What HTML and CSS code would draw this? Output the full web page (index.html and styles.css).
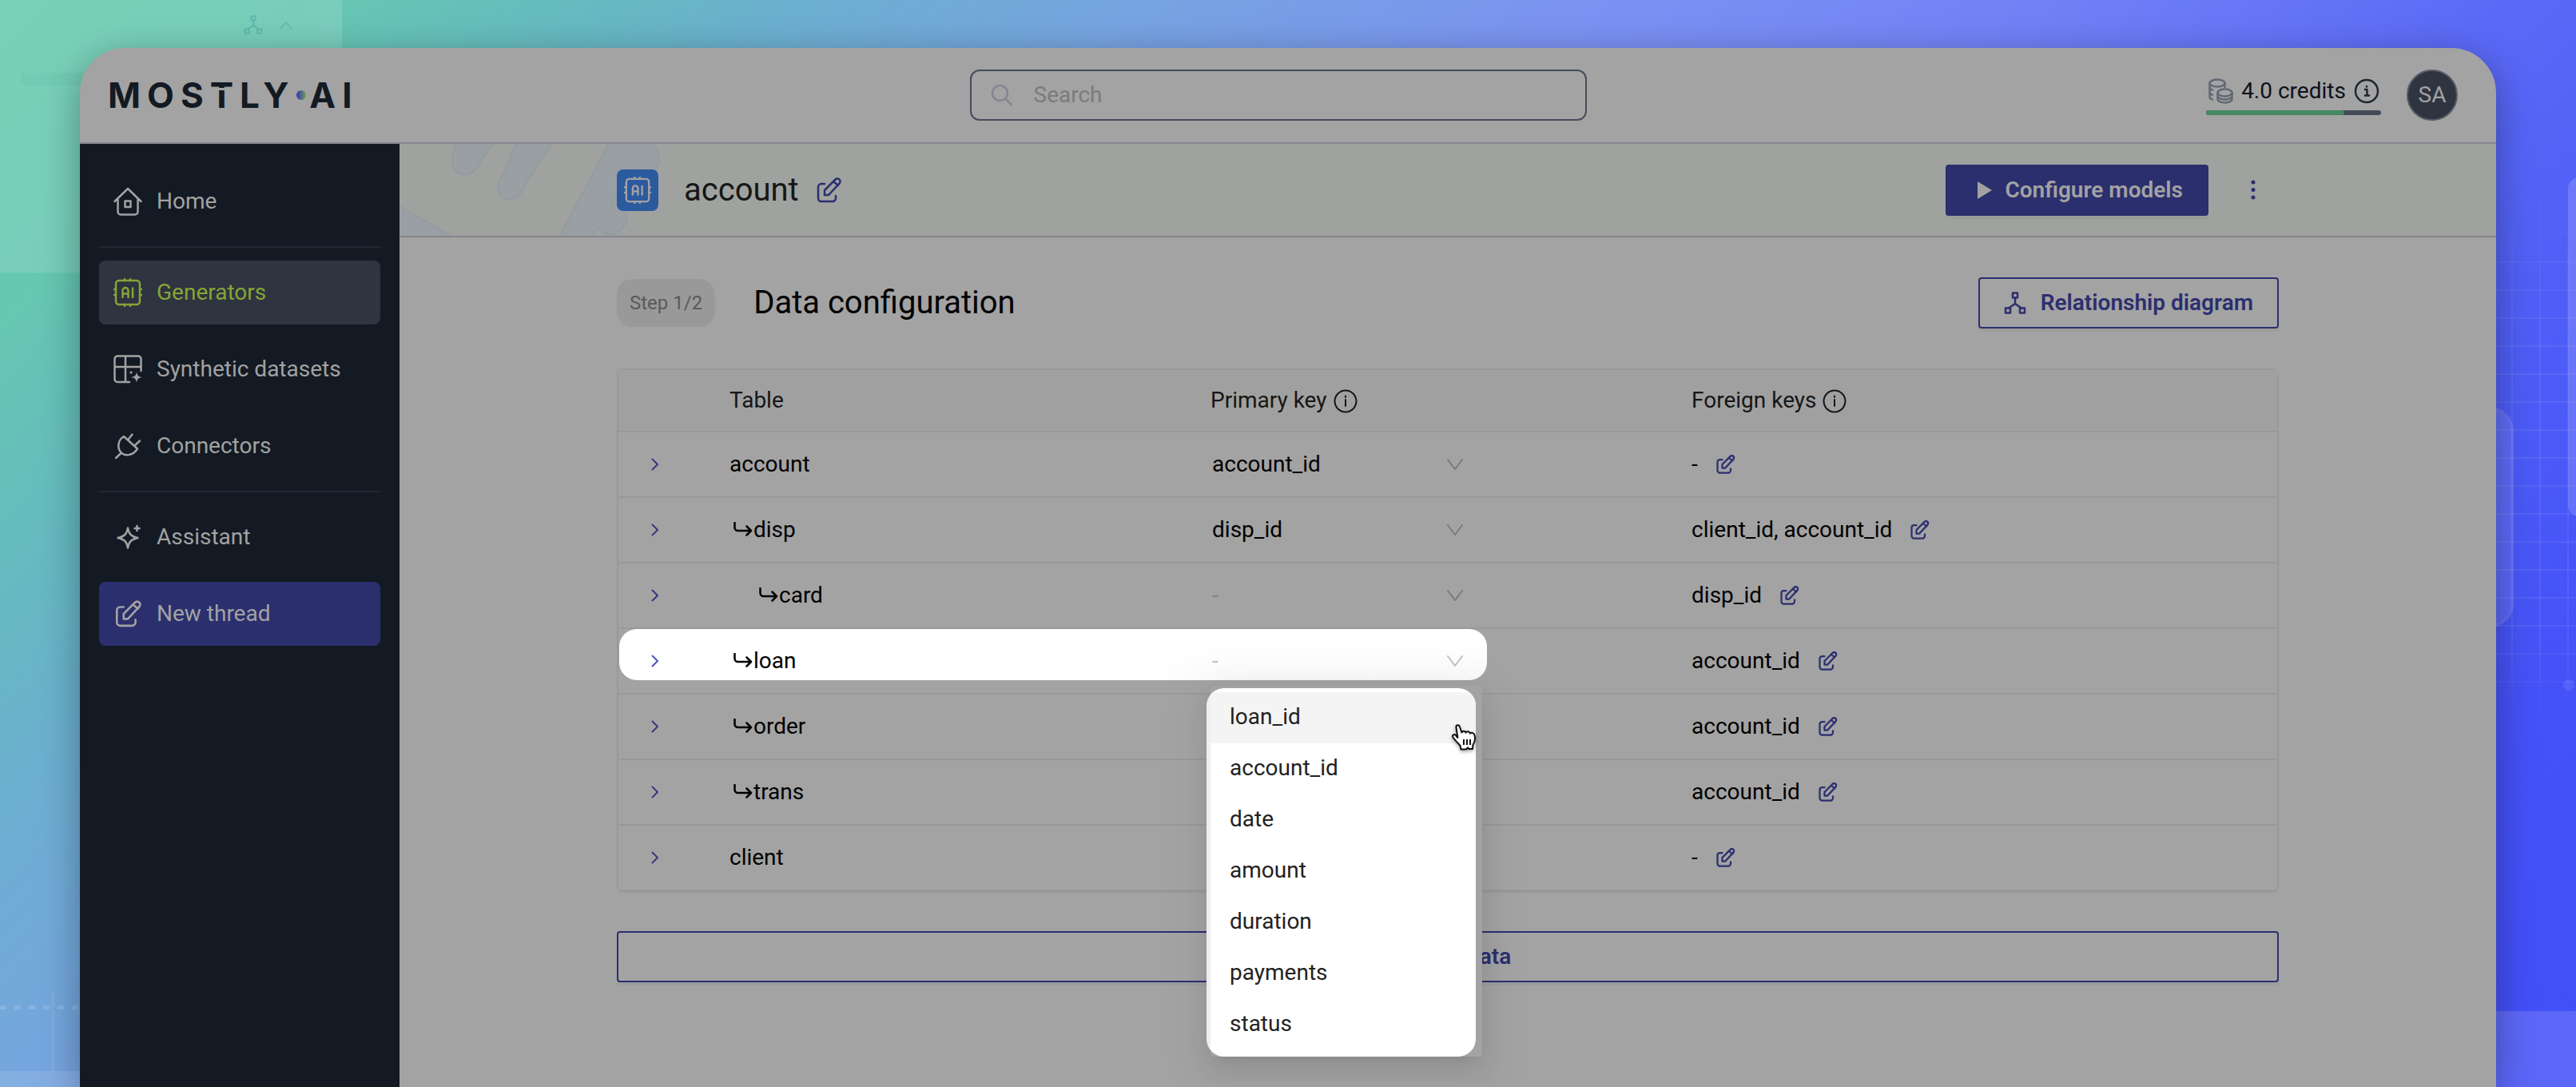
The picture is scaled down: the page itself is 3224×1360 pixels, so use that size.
FILE: index.html
```html
<!DOCTYPE html>
<html lang="en">
<head>
<meta charset="utf-8">
<title>account – Data configuration</title>
<link rel="stylesheet" href="styles.css">
</head>
<body>
<svg class="sprite" aria-hidden="true">
  <symbol id="i-edit" viewBox="0 0 32 32"><path d="M10 8H6a4 4 0 0 0-4 4v14a4 4 0 0 0 4 4h14a4 4 0 0 0 4-4v-3M10 22v-6L23.500 2.500a3.500 3.500 0 0 1 5 0a3.500 3.500 0 0 1 0 5L15 22zM21 5l6 5" /></symbol>
  <symbol id="i-ai" viewBox="0 0 36 36"><rect x="3" y="3" width="30" height="30" rx="4"/><path d="M14 1v2M21 1v2M14 33v2M21 33v2M1 14h2M1 21h2M33 14h2M33 21h2M11.500 24v-8.500a3.500 3.500 0 0 1 7 0V24M11.500 19.500h7M24 12.500V24"/></symbol>
  <symbol id="i-info" viewBox="0 0 32 32"><circle cx="16" cy="16" r="13.500"/><path d="M16 14v8M16 9.500v1.500"/></symbol>
  <symbol id="i-tree" viewBox="0 0 28 28"><rect x="11" y="1.500" width="6" height="6"/><rect x="2" y="20.500" width="6" height="6"/><rect x="20" y="20.500" width="6" height="6"/><path d="M14 7.500V15M14 15l-8 5.500M14 15l8 5.500"/></symbol>
  <symbol id="i-right" viewBox="0 0 10 16"><path d="M1.500 1.500L8 8l-6.500 6.500"/></symbol>
  <symbol id="i-down" viewBox="0 0 20 14"><path d="M1 1l9 12L19 1"/></symbol>
  <symbol id="i-branch" viewBox="0 0 26 20"><path d="M2.500 1v6a4 4 0 0 0 4 4H22M17.500 5.500L23 11l-5.500 5.500"/></symbol>
</svg>

<div class="backdrop" aria-hidden="true">
  <div class="panel-tl">
    <svg class="icon ghost-tree"><use href="#i-tree"/></svg>
    <svg class="icon ghost-caret" viewBox="0 0 16 10"><path d="M1 9l7-8l7 8"/></svg>
  </div>
  <div class="bar-tl"></div>
  <div class="grid-r"></div>
  <div class="card-r"></div>
  <div class="pill-r"></div>
  <div class="dot-r"></div>
  <div class="panel-br"></div>
  <div class="dots-bl"></div>
  <div class="line-bl"></div>
  <div class="panel-bl"></div>
</div>

<div class="app">
  <header class="topbar">
    <a class="logo" href="#" aria-label="MOSTLY AI"><span>MOS</span><span class="logo-t">T</span><span>LY</span><i class="logo-dot"></i><span>AI</span></a>
    <label class="search">
      <svg class="icon" viewBox="0 0 28 28"><circle cx="11.500" cy="11.500" r="9.500"/><path d="M18 18.500L26 26"/></svg>
      <input type="search" placeholder="Search" aria-label="Search">
    </label>
    <div class="account">
      <div class="credits">
        <div class="credits-row">
          <svg class="icon coins" viewBox="0 0 32 32"><ellipse cx="12" cy="6" rx="9.500" ry="4.500"/><path d="M2.500 6v17c0 1.500 1.500 3 3.500 3.500M2.500 11.500c0 1 1.500 2.500 3.500 3M2.500 17c0 1.500 1.500 3 3.500 3.500M21.500 6v5"/><ellipse cx="21.500" cy="18" rx="9" ry="4.500"/><path d="M12.500 18v8c0 2.500 4 4.500 9 4.500s9-2 9-4.500v-8M12.500 22c0 2.500 4 4.500 9 4.500s9-2 9-4.500"/></svg>
          <span>4.0 credits</span>
          <svg class="icon info-dark" viewBox="0 0 32 32"><circle cx="16" cy="16" r="14"/><path d="M14 14h2.500v7.500M14 21.500h5M16 10v.5"/></svg>
        </div>
        <div class="meter"><div class="meter-fill" style="width:79%"></div></div>
      </div>
      <button class="avatar" type="button">SA</button>
    </div>
  </header>

  <div class="body">
    <nav class="sidebar">
      <a href="#" class="nav-item"><svg class="icon" viewBox="0 0 36 36"><path d="M1.500 18L18 2l16.500 16M5.500 15v16a3.500 3.500 0 0 0 3.500 3.500h18a3.500 3.500 0 0 0 3.500-3.500V15"/><rect x="14.500" y="17.500" width="7" height="7.500"/></svg>Home</a>
      <hr>
      <a href="#" class="nav-item is-active"><svg class="icon"><use href="#i-ai"/></svg>Generators</a>
      <a href="#" class="nav-item"><svg class="icon" viewBox="0 0 36 36"><path d="M20 34H5a3.500 3.500 0 0 1-3.500-3.500V5A3.500 3.500 0 0 1 5 1.500h26A3.500 3.500 0 0 1 34.500 5v15M1.500 15h33M15 1.500V34"/><path class="solid" d="M29 21.500c1 4.500 2 5.500 6.500 6.500c-4.500 1-5.500 2-6.500 6.500c-1-4.500-2-5.500-6.500-6.500c4.500-1 5.500-2 6.500-6.500zM22 19.500c.5 1.500.8 2 2.500 2.500c-1.700.5-2 1-2.500 2.500c-.5-1.500-.8-2-2.500-2.500c1.700-.5 2-1 2.500-2.500z"/></svg>Synthetic datasets</a>
      <a href="#" class="nav-item"><svg class="icon" viewBox="0 0 36 36"><path d="M3 33l6.500-6M13 6L30 21.500M13 6C5.500 10.500 4.500 20 9 25.500s15 5.500 21-4M18 10.500L23.500 3.500M26 18l7-6.500"/></svg>Connectors</a>
      <hr>
      <a href="#" class="nav-item"><svg class="icon" viewBox="0 0 36 36"><path d="M18 6.500c1.500 8 4 10.500 12.500 12.500C22 21 19.500 23.500 18 31.500C16.500 23.500 14 21 5.500 19C14 17 16.500 14.500 18 6.500zM29.500 4v6M26.500 7h6"/></svg>Assistant</a>
      <a href="#" class="nav-item is-primary"><svg class="icon" viewBox="-2 0 34 32"><use href="#i-edit" width="32" height="32"/></svg>New thread</a>
    </nav>

    <main class="main">
      <section class="titlebar">
        <svg class="pattern" viewBox="0 0 340 115" aria-hidden="true"><path d="M72 -2C65 12 62 30 74 37C86 42 97 34 101 22L119 -2M147 -2L124 50C120 64 130 71 140 69C152 66 155 56 160 46L192 -2M-2 77L70 118H-2zM263 -2L199 118H241L248 105C262 122 280 110 284 96C286 82 280 78 267 74C268 62 285 74 305 55C320 40 330 20 322 6C320 2 317 0 313 -2z"/></svg>
        <div class="container titlebar-row">
          <span class="kind"><svg class="icon"><use href="#i-ai"/></svg></span>
          <h1>account</h1>
          <button class="link-btn" type="button" aria-label="Rename"><svg class="icon edit-lg"><use href="#i-edit"/></svg></button>
          <span class="spacer"></span>
          <button class="btn btn-solid" type="button"><svg class="play" viewBox="0 0 18 22"><path d="M0 0l18 11L0 22z"/></svg>Configure models</button>
          <button class="more" type="button" aria-label="More"><svg viewBox="0 0 6 26"><circle cx="3" cy="3" r="2.500"/><circle cx="3" cy="12.500" r="2.500"/><circle cx="3" cy="22" r="2.500"/></svg></button>
        </div>
      </section>

      <div class="container content">
        <div class="step-row">
          <span class="step">Step 1/2</span>
          <h2>Data configuration</h2>
          <span class="spacer"></span>
          <button class="btn btn-outline" type="button"><svg class="icon"><use href="#i-tree"/></svg>Relationship diagram</button>
        </div>

        <table class="tables">
          <colgroup><col class="c-expand"><col class="c-name"><col class="c-key"><col></colgroup>
          <thead>
            <tr><th></th><th>Table</th><th>Primary key <svg class="icon info"><use href="#i-info"/></svg></th><th>Foreign keys <svg class="icon info"><use href="#i-info"/></svg></th></tr>
          </thead>
          <tbody>
            <tr><td><button class="expand" type="button" aria-label="Expand account"><svg class="icon"><use href="#i-right"/></svg></button></td><td>account</td><td><div class="pick"><select aria-label="Primary key of account"><option>account_id</option></select><svg class="icon"><use href="#i-down"/></svg></div></td><td><div class="fk">-<button type="button" aria-label="Edit"><svg class="icon"><use href="#i-edit"/></svg></button></div></td></tr>
            <tr><td><button class="expand" type="button" aria-label="Expand disp"><svg class="icon"><use href="#i-right"/></svg></button></td><td><div class="name d1"><svg class="icon"><use href="#i-branch"/></svg>disp</div></td><td><div class="pick"><select aria-label="Primary key of disp"><option>disp_id</option></select><svg class="icon"><use href="#i-down"/></svg></div></td><td><div class="fk">client_id, account_id<button type="button" aria-label="Edit"><svg class="icon"><use href="#i-edit"/></svg></button></div></td></tr>
            <tr><td><button class="expand" type="button" aria-label="Expand card"><svg class="icon"><use href="#i-right"/></svg></button></td><td><div class="name d2"><svg class="icon"><use href="#i-branch"/></svg>card</div></td><td><div class="pick is-empty"><select aria-label="Primary key of card"><option>-</option></select><svg class="icon"><use href="#i-down"/></svg></div></td><td><div class="fk">disp_id<button type="button" aria-label="Edit"><svg class="icon"><use href="#i-edit"/></svg></button></div></td></tr>
            <tr class="is-open"><td><button class="expand" type="button" aria-label="Expand loan"><svg class="icon"><use href="#i-right"/></svg></button></td><td><div class="name d1"><svg class="icon"><use href="#i-branch"/></svg>loan</div></td><td><div class="pick is-empty"><select aria-label="Primary key of loan"><option>-</option></select><svg class="icon"><use href="#i-down"/></svg>
              <div class="menu">
                <ul role="listbox" aria-label="Columns of loan">
                  <li role="option" class="is-hover">loan_id</li>
                  <li role="option">account_id</li>
                  <li role="option">date</li>
                  <li role="option">amount</li>
                  <li role="option">duration</li>
                  <li role="option">payments</li>
                  <li role="option">status</li>
                </ul>
                <svg class="hand" viewBox="0 0 32 36"><path d="M8.500 18.500L6.500 5.500C6 1.500 10 1 11 4.500L13.500 12C14 9 17.500 9 18.500 11.500C20 9.500 23 10 24 12.500C26 11 29 12 29.500 15C31 20 30 23 27.500 27L27 32H22.500L21 30.500L19 32.500H12.500L11.500 28C9 25 5 21 2.500 17.500C1 14.500 4 13 6 15z"/><path d="M16 20v7M20 20v7M24 20v7"/></svg>
              </div></div></td><td><div class="fk">account_id<button type="button" aria-label="Edit"><svg class="icon"><use href="#i-edit"/></svg></button></div></td></tr>
            <tr><td><button class="expand" type="button" aria-label="Expand order"><svg class="icon"><use href="#i-right"/></svg></button></td><td><div class="name d1"><svg class="icon"><use href="#i-branch"/></svg>order</div></td><td></td><td><div class="fk">account_id<button type="button" aria-label="Edit"><svg class="icon"><use href="#i-edit"/></svg></button></div></td></tr>
            <tr><td><button class="expand" type="button" aria-label="Expand trans"><svg class="icon"><use href="#i-right"/></svg></button></td><td><div class="name d1"><svg class="icon"><use href="#i-branch"/></svg>trans</div></td><td></td><td><div class="fk">account_id<button type="button" aria-label="Edit"><svg class="icon"><use href="#i-edit"/></svg></button></div></td></tr>
            <tr><td><button class="expand" type="button" aria-label="Expand client"><svg class="icon"><use href="#i-right"/></svg></button></td><td>client</td><td></td><td><div class="fk">-<button type="button" aria-label="Edit"><svg class="icon"><use href="#i-edit"/></svg></button></div></td></tr>
          </tbody>
        </table>

        <button class="btn btn-outline btn-wide" type="button"><svg class="icon" viewBox="0 0 28 28"><path d="M14 4v20M4 14h20"/></svg>Add data</button>
      </div>
    </main>
  </div>
</div>
</body>
</html>
```
FILE: styles.css
```css
:root {
  --surface: #a3a3a3;
  --line: #999999;
  --rule: #85868e;
  --indigo: #2b2f6e;
  --navy: #131a23;
  --muted: #a2a2a2;
}

* { box-sizing: border-box; }

body {
  margin: 0;
  height: 100vh;
  padding: 60px 100px 0;
  display: flex;
  position: relative;
  overflow: hidden;
  font: 28px/40px Roboto, "Noto Sans", sans-serif;
  color: #000;
  background: linear-gradient(135deg, #66ccac 0%, #66c7b2 9%, #66b8c2 17%, #6cafd0 22%, #76a4e0 31%, #7b92f2 44%, #7283f6 55%, #5a69f6 69%, #4452f8 88%, #424ff8 100%);
}

button, input, select { font: inherit; color: inherit; }
button { border: 0; background: none; padding: 0; cursor: pointer; }
a { color: inherit; text-decoration: none; }
h1, h2, ul, hr { margin: 0; padding: 0; }

.sprite { position: absolute; width: 0; height: 0; }
.icon { display: block; flex: none; fill: none; stroke: currentColor; stroke-width: 2.5; stroke-linecap: round; stroke-linejoin: round; }
.solid { fill: currentColor; stroke: none; }
.spacer { flex: 1; }

/* Decorative backdrop */
.backdrop > * { position: absolute; }
.panel-tl { left: 0; top: 0; width: 428px; height: 341px; background: rgba(255, 255, 255, .12); color: #5fb9ae; border-right: 30px solid rgba(255, 255, 255, .02); }
.ghost-tree { position: absolute; left: 305px; top: 19px; width: 24px; height: 24px; }
.ghost-caret { position: absolute; left: 350px; top: 27px; width: 16px; height: 10px; stroke-width: 1.5; }
.bar-tl { left: 26px; top: 91px; width: 90px; height: 16px; background: rgba(40, 140, 120, .07); }
.grid-r {
  right: 0; top: 222px; width: 100px; height: 680px;
  background:
    repeating-linear-gradient(to bottom, rgba(255, 255, 255, .07) 0 2px, transparent 2px 35px),
    repeating-linear-gradient(to right, transparent 0 19px, rgba(255, 255, 255, .07) 19px 21px, transparent 21px 35px);
  -webkit-mask-image: linear-gradient(transparent, #000 30%, #000 85%, transparent);
  mask-image: linear-gradient(transparent, #000 30%, #000 85%, transparent);
}
.card-r { right: -20px; top: 222px; width: 30px; height: 424px; border-radius: 14px; background: rgba(255, 255, 255, .16); }
.pill-r { right: 78px; top: 509px; width: 60px; height: 276px; border-radius: 30px; border: 4px solid rgba(255, 255, 255, .04); background: rgba(255, 255, 255, .1); }
.dot-r { right: 2px; top: 850px; width: 14px; height: 14px; border-radius: 50%; background: rgba(255, 255, 255, .09); }
.panel-br { right: 0; bottom: 0; width: 140px; height: 95px; background: rgba(255, 255, 255, .14); }
.dots-bl { left: 0; top: 1258px; width: 100px; height: 5px; background: repeating-linear-gradient(to right, rgba(255, 255, 255, .14) 0 8px, transparent 8px 18px); }
.line-bl { left: 64px; top: 1240px; width: 4px; height: 100px; background: rgba(255, 255, 255, .06); }
.panel-bl { left: 0; bottom: 0; width: 100px; height: 20px; background: rgba(255, 255, 255, .1); }

/* Window */
.app {
  position: relative;
  flex: 1;
  display: flex;
  flex-direction: column;
  border-radius: 56px 56px 0 0;
  background: var(--surface);
  box-shadow: 0 12px 48px rgba(0, 0, 0, .34);
  overflow: hidden;
}

.topbar {
  height: 120px;
  flex: none;
  display: flex;
  align-items: center;
  justify-content: space-between;
  padding: 0 48px 0 35px;
  border-bottom: 2px solid var(--rule);
}
.logo { display: flex; align-items: center; width: 303px; font: 700 44px/48px Inter, sans-serif; letter-spacing: 8px; color: var(--navy); }
.logo-t { position: relative; }
.logo-t::after { content: ""; position: absolute; left: 0; right: 0; top: 15px; height: 3px; background: var(--surface); }
.logo-dot { flex: none; width: 12px; height: 12px; border-radius: 50%; margin: 0 4px 0 2px; background: linear-gradient(to right, #3a35a8, #4a6a90 50%, #7ca336); }

.search {
  display: flex;
  align-items: center;
  gap: 26px;
  width: 772px;
  height: 64px;
  padding: 0 24px;
  border: 2px solid #454c59;
  border-radius: 12px;
  color: #84868f;
}
.search .icon { width: 28px; height: 28px; }
.search input { flex: 1; min-width: 0; border: 0; outline: 0; padding: 0; background: none; }
.search input::placeholder { color: #7b7b7b; opacity: 1; }

.account { display: flex; align-items: center; gap: 32px; }
.credits { width: 219px; color: #0d111b; }
.credits-row { display: flex; align-items: center; justify-content: space-between; padding: 0 2px; }
.credits-row .icon { width: 32px; height: 32px; }
.coins { color: #626974; }
.info-dark { color: #1e2631; }
.meter { height: 6px; margin-top: 4px; border-radius: 3px; overflow: hidden; background: #434957; }
.meter-fill { height: 100%; border-radius: 3px; background: #458861; }
.avatar { width: 64px; height: 64px; border-radius: 50%; border: 2px solid #555c67; background: #2e3440; color: var(--muted); }

.body { flex: 1; display: flex; min-height: 0; }

.sidebar { flex: none; width: 400px; padding: 32px 24px; display: flex; flex-direction: column; gap: 16px; background: var(--navy); color: var(--muted); }
.sidebar hr { border: 0; height: 2px; flex: none; background: #212935; }
.nav-item { display: flex; align-items: center; gap: 18px; height: 80px; padding: 0 18px; border-radius: 8px; }
.nav-item .icon { width: 36px; height: 36px; }
.is-active { background: #2e3440; color: #87a436; }
.is-primary { background: var(--indigo); }

.main { flex: 1; min-width: 0; }
.container { max-width: 2080px; margin: 0 auto; }
.titlebar { position: relative; height: 117px; border-bottom: 2px solid var(--rule); background: #9fa29f; }
.pattern { position: absolute; left: 0; top: 0; width: 340px; height: 115px; fill: #999fa3; stroke: #949ba1; stroke-width: 2; }
.titlebar-row { position: relative; height: 115px; display: flex; align-items: center; }
.kind { width: 52px; height: 52px; margin-right: 32px; display: grid; place-items: center; border-radius: 8px; background: #2b5a9f; color: var(--muted); }
.kind .icon { width: 34px; height: 34px; }
h1, h2 { font-weight: 400; font-size: 40px; line-height: 48px; }
h1 { color: #161616; }
.link-btn { margin-left: 22px; color: var(--indigo); }
.edit-lg { width: 32px; height: 32px; }

.btn { display: flex; align-items: center; justify-content: center; height: 64px; padding: 0 32px; border-radius: 4px; font-weight: 600; box-shadow: 0 4px 0 rgba(0, 0, 0, .03); }
.btn-solid { gap: 16px; padding: 0 32px 0 40px; background: var(--indigo); color: var(--muted); }
.play { width: 18px; height: 22px; fill: currentColor; }
.btn-outline { gap: 18px; padding: 0 30px; border: 2px solid var(--indigo); color: var(--indigo); }
.btn-outline .icon { width: 28px; height: 28px; }
.btn-wide { width: 100%; margin-top: 48px; }
.more { width: 64px; height: 64px; margin-left: 24px; display: grid; place-items: center; }
.more svg { width: 6px; height: 26px; fill: var(--indigo); }

.content { padding-top: 50px; }
.step-row { display: flex; align-items: center; margin-bottom: 50px; }
.step { height: 60px; padding: 0 16px; border-radius: 20px; background: #999999; color: #595959; font-size: 24px; line-height: 60px; }
h2 { margin-left: 48px; }

.tables { width: 100%; table-layout: fixed; border-collapse: separate; border-spacing: 0; border: 2px solid var(--line); border-radius: 8px; }
.c-expand { width: 107px; }
.c-name, .c-key { width: 29%; }
.tables th, .tables td { padding: 0 32px; text-align: left; font-weight: 400; border-bottom: 2px solid var(--line); }
.tables th { height: 78px; color: #161616; background: #a0a0a0; }
.tables td { height: 82px; }
.info { display: inline-block; width: 32px; height: 32px; vertical-align: -8px; stroke-width: 2; }
.expand { display: grid; place-items: center; width: 28px; height: 40px; color: #343a80; }
.expand .icon { width: 10px; height: 16px; stroke-width: 2; }
.name { display: flex; align-items: center; }
.name .icon { width: 26px; height: 20px; }
.d1 { padding-left: 4px; }
.d2 { padding-left: 36px; }
.fk { display: flex; align-items: center; gap: 23px; }
.fk .icon { width: 24px; height: 24px; color: var(--indigo); stroke-width: 3; }

.pick { position: relative; width: 340px; display: flex; align-items: center; }
.pick select { appearance: none; width: 100%; height: 40px; border: 0; padding: 0 56px 0 2px; background: none; opacity: 1; }
.pick > .icon { position: absolute; right: 24px; width: 20px; height: 14px; color: #7a7a7a; stroke-width: 2; }
.is-empty select { color: #808080; }

/* Row in focus */
.is-open td { position: relative; z-index: 1; }
.is-open td:first-child::before {
  content: "";
  position: absolute;
  left: 1px;
  top: 0;
  width: 1086px;
  height: 64px;
  border-radius: 22px;
  background: linear-gradient(to right, #fff 650px, transparent 800px), linear-gradient(#fff 30%, #f9f9f9);
}
.is-open td:first-child { z-index: 0; }
.is-open .expand { position: relative; color: #4d55bd; }
.is-open .is-empty select { color: #bfbfbf; }
.is-open .pick > .icon { color: #bfbfbf; }

.menu {
  position: absolute;
  left: 0;
  top: 51px;
  width: 340px;
  height: 464px;
  border-radius: 4px;
  background: var(--surface);
  box-shadow: 0 12px 32px rgba(0, 0, 0, .08), 0 6px 12px -8px rgba(0, 0, 0, .12), 0 18px 56px 16px rgba(0, 0, 0, .05);
}
.menu ul {
  position: absolute;
  inset: 3px 8px 0 -5px;
  padding-top: 5px;
  border-radius: 22px;
  overflow: hidden;
  list-style: none;
  color: #222;
  background: linear-gradient(to right, #eee 5px, #fff 5px);
}
.menu li { height: 64px; margin-left: 5px; padding: 0 24px; line-height: 62px; }
.menu .is-hover { background: #f4f4f4; }
.hand { position: absolute; left: 301px; top: 47px; width: 32px; height: 36px; fill: #fff; stroke: #111; stroke-width: 2; filter: drop-shadow(0 2px 2px rgba(0, 0, 0, .35)); }
```
